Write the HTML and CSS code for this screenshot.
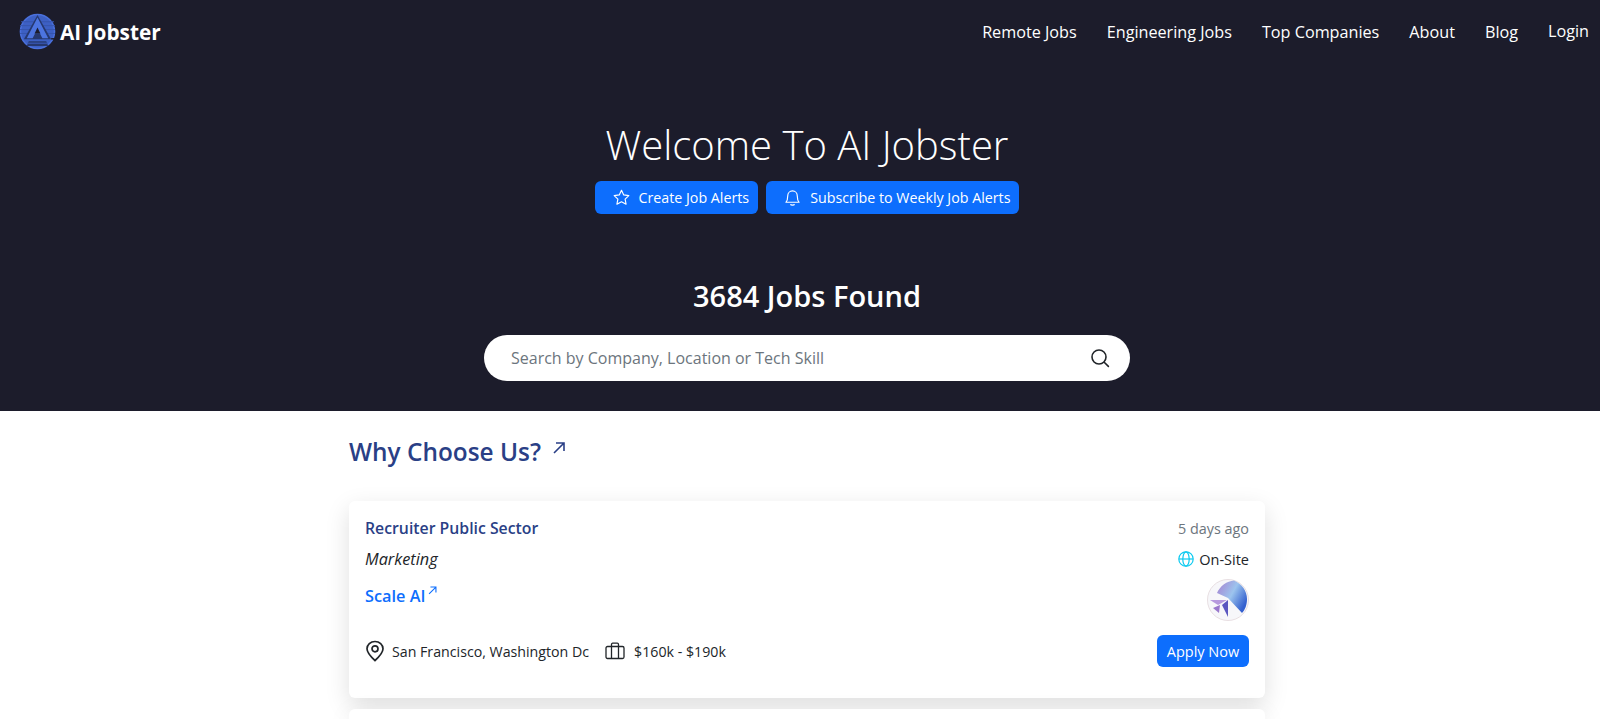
FILE: index.html
```html
<!DOCTYPE html>
<html lang="en">

<head>
    <meta charset="UTF-8" />
    <title>AI Jobster</title>
    <link rel="stylesheet" href="styles.css">
</head>

<body>
    <header class="hero">
        <nav class="navbar">
            <a class="brand" href="#">
                <svg class="brand-logo" viewBox="0 0 38 38" width="37" height="37">
                    <circle cx="19" cy="19" r="17.5" fill="#3d60c4" stroke="#4a70dc" stroke-width="1.6" />
                    <path d="M2 9 H36 M1 13 H37 M1 17 H37 M1 21 H37" stroke="#3654ad" stroke-width="1" />
                    <path d="M19 2 L33 27 H5 Z" fill="#26386f" />
                    <path d="M19 4.5 L30 26 H24 L21.5 21 H16.5 L14 26 H8 Z" fill="#4c74e0" />
                    <path d="M19 15 L22 21 H16 Z" fill="#1c1c2b" />
                    <path d="M10 29 H28 L30 34 H8 Z" fill="#26386f" />
                    <path d="M9 31 H29" stroke="#3d60c4" stroke-width="1" />
                    <path d="M33 26.5 H38" stroke="#1c1c2b" stroke-width="1.5" />
                </svg>
                <span>AI Jobster</span>
            </a>
            <ul class="nav-links">
                <li><a href="#">Remote Jobs</a></li>
                <li><a href="#">Engineering Jobs</a></li>
                <li><a href="#">Top Companies</a></li>
                <li><a href="#">About</a></li>
                <li><a href="#">Blog</a></li>
                <li class="nav-login"><a href="#">Login</a></li>
            </ul>
        </nav>

        <div class="hero-body">
            <h1 class="hero-title">Welcome To AI Jobster</h1>
            <div class="hero-actions">
                <a class="btn btn-alert" href="#">
                    <svg viewBox="0 0 16 16" width="17" height="17" fill="none" stroke="currentColor" stroke-width="1.1" stroke-linejoin="round">
                        <path d="M8 1.2 L10.1 5.6 L14.9 6.2 L11.4 9.5 L12.3 14.3 L8 12 L3.7 14.3 L4.6 9.5 L1.1 6.2 L5.9 5.6 Z" />
                    </svg>
                    Create Job Alerts
                </a>
                <a class="btn btn-alert" href="#">
                    <svg viewBox="0 0 16 16" width="17" height="17" fill="none" stroke="currentColor" stroke-width="1.1" stroke-linejoin="round">
                        <path d="M1.8 12.5 C3.2 11 3.5 9.5 3.5 6.5 C3.5 3.8 5.5 1.8 8 1.8 C10.5 1.8 12.5 3.8 12.5 6.5 C12.5 9.5 12.8 11 14.2 12.5 Z" />
                        <path d="M6 14.5 C6.6 15.3 9.4 15.3 10 14.5" />
                    </svg>
                    Subscribe to Weekly Job Alerts
                </a>
            </div>
            <h2 class="jobs-found">3684 Jobs Found</h2>
            <form class="search-box">
                <input type="text" placeholder="Search by Company, Location or Tech Skill" />
                <svg viewBox="0 0 20 20" width="20" height="20" fill="none" stroke="#212529" stroke-width="1.6" stroke-linecap="round">
                    <circle cx="9" cy="9" r="7" />
                    <path d="M14.2 14.2 L18.4 18.4" />
                </svg>
            </form>
        </div>
    </header>

    <main class="content">
        <h2 class="why-heading">
            <a href="#">Why Choose Us?</a>
            <svg class="arrow-large" viewBox="0 0 16 16" width="16" height="16" fill="none" stroke="currentColor" stroke-width="1.6">
                <path d="M3 13 L13 3 M5 3 H13 V11" />
            </svg>
        </h2>

        <article class="job-card">
            <div class="job-row">
                <a class="job-title" href="#">Recruiter Public Sector</a>
                <span class="job-age">5 days ago</span>
            </div>
            <div class="job-row">
                <em class="job-dept">Marketing</em>
                <span class="job-site">
                    <svg viewBox="0 0 16 16" width="16" height="16" fill="none" stroke="#0dcaf0" stroke-width="1.2">
                        <circle cx="8" cy="8" r="7.2" />
                        <ellipse cx="8" cy="8" rx="3.2" ry="7.2" />
                        <path d="M1 8 H15" />
                    </svg>
                    On-Site
                </span>
            </div>
            <div class="job-row job-row-company">
                <a class="job-company" href="#">Scale AI<svg viewBox="0 0 16 16" width="11" height="11" fill="none" stroke="currentColor" stroke-width="1.6"><path d="M3 13 L13 3 M5 3 H13 V11" /></svg></a>
                <svg class="company-logo" viewBox="0 0 42 42" width="42" height="42">
                    <defs>
                        <linearGradient id="wing" x1="0" y1="0" x2="1" y2="0.6">
                            <stop offset="0" stop-color="#a77fd0" />
                            <stop offset="0.55" stop-color="#9cc4ee" />
                            <stop offset="1" stop-color="#3561cf" />
                        </linearGradient>
                    </defs>
                    <circle cx="21" cy="21" r="20.5" fill="#f7f7fa" stroke="#e8dfe2" />
                    <path d="M10 14 C13 7 20 2 27 1.5 C35 5 40 12 40 20 C40 26 38 31 35 34 L21 19 Z" fill="url(#wing)" />
                    <path d="M3 21 H20 L11 26 Z" fill="#b79ade" />
                    <path d="M6 29 L13 26 L12 34 Z" fill="#9a78cc" />
                    <path d="M21 21 V38 L15 26 Z" fill="#5b57c0" />
                </svg>
            </div>
            <div class="job-row job-row-bottom">
                <div class="job-meta">
                    <span class="meta-item">
                        <svg viewBox="0 0 20 22" width="20" height="22" fill="none" stroke="#212529" stroke-width="1.7">
                            <path d="M10 20.5 C5 16 2 12.5 2 8.8 C2 4.6 5.5 1.5 10 1.5 C14.5 1.5 18 4.6 18 8.8 C18 12.5 15 16 10 20.5 Z" />
                            <circle cx="10" cy="8.8" r="3" />
                        </svg>
                        San Francisco, Washington Dc
                    </span>
                    <span class="meta-item meta-salary">
                        <svg viewBox="0 0 20 18" width="20" height="18" fill="none" stroke="#212529" stroke-width="1.3">
                            <rect x="1" y="4.5" width="18" height="12" rx="1.5" />
                            <path d="M6.5 4.5 V2.5 C6.5 1.8 7 1.2 7.7 1.2 H12.3 C13 1.2 13.5 1.8 13.5 2.5 V4.5 M6.5 4.5 V16.5 M13.5 4.5 V16.5" />
                        </svg>
                        $160k - $190k
                    </span>
                </div>
                <a class="btn btn-apply" href="#">Apply Now</a>
            </div>
        </article>

        <article class="job-card job-card-next"></article>
    </main>
</body>

</html>
```

FILE: styles.css
```css
* {
    box-sizing: border-box;
    margin: 0;
    padding: 0;
}

html,
body {
    height: 719px;
    overflow: hidden;
}

body {
    font-family: 'Open Sans', 'Noto Sans', sans-serif;
    font-size: 15px;
    color: #212529;
    background: #fff;
}

a {
    text-decoration: none;
    color: inherit;
}

.hero {
    height: 411px;
    background: #1c1c2b;
    color: #fff;
}

.navbar {
    display: flex;
    align-items: center;
    justify-content: space-between;
    height: 63px;
    padding: 0 11px 0 19px;
}

.brand {
    display: flex;
    align-items: center;
    gap: 4px;
    font-size: 20.8px;
    font-weight: 700;
}

.nav-links {
    display: flex;
    gap: 30px;
    list-style: none;
    font-size: 16.2px;
}

.nav-login {
    position: relative;
    top: -1px;
}

.hero-body {
    display: flex;
    flex-direction: column;
    align-items: center;
    padding: 55px 0 0 14px;
}

.hero-title {
    font-size: 40px;
    font-weight: 300;
    line-height: 54px;
}

.hero-actions {
    display: flex;
    gap: 8px;
    margin-top: 9px;
}

.btn {
    display: inline-flex;
    align-items: center;
    background: #0d6efd;
    color: #fff;
    border-radius: 6px;
}

.btn-alert {
    gap: 9px;
    height: 33px;
    padding: 0 9px 0 18px;
    font-size: 14.25px;
}

.jobs-found {
    margin-top: 63px;
    font-size: 29px;
    font-weight: 600;
    line-height: 38px;
}

.search-box {
    display: flex;
    align-items: center;
    justify-content: space-between;
    width: 646px;
    height: 46px;
    margin-top: 20px;
    padding: 0 20px 0 27px;
    background: #fff;
    border-radius: 23px;
}

.search-box input {
    flex: 1;
    border: none;
    outline: none;
    font-family: inherit;
    font-size: 16px;
    color: #212529;
}

.search-box input::placeholder {
    color: #6c757d;
    opacity: 1;
}

.content {
    width: 916px;
    margin-left: 349px;
}

.why-heading {
    display: flex;
    align-items: flex-start;
    gap: 10px;
    height: 90px;
    padding-top: 24px;
    font-size: 24.4px;
    font-weight: 600;
    line-height: 34px;
    color: #2a3f86;
}

.arrow-large {
    margin-top: 5px;
}

.job-card {
    height: 197px;
    margin-bottom: 11px;
    padding: 16px;
    background: #fff;
    border-radius: 6px;
    box-shadow: 0 8px 24px rgba(0, 0, 0, 0.13);
}

.job-card-next {
    height: 10px;
    margin-bottom: 0;
    padding: 0;
    border-radius: 6px 6px 0 0;
}

.job-row {
    display: flex;
    align-items: center;
    justify-content: space-between;
    height: 22px;
    margin-bottom: 9px;
}

.job-title {
    font-size: 15.8px;
    font-weight: 600;
    color: #2a3f86;
}

.job-age {
    font-size: 14.4px;
    color: #6c757d;
}

.job-dept {
    font-size: 16.3px;
}

.job-site {
    display: flex;
    align-items: center;
    gap: 5px;
    font-size: 14.5px;
}

.job-row-company {
    height: 42px;
    margin-bottom: 14px;
    align-items: flex-start;
}

.job-company {
    display: flex;
    align-items: flex-start;
    gap: 2px;
    margin-top: 6px;
    font-size: 16.3px;
    font-weight: 600;
    color: #0d6efd;
}

.job-row-bottom {
    height: 33px;
    align-items: flex-start;
}

.job-meta {
    display: flex;
    gap: 16px;
    margin-top: 5px;
}

.meta-item {
    display: flex;
    align-items: center;
    gap: 7px;
    font-size: 14.2px;
}

.meta-salary {
    gap: 9px;
}

.btn-apply {
    justify-content: center;
    width: 92px;
    height: 32px;
    font-size: 14.5px;
}
```
